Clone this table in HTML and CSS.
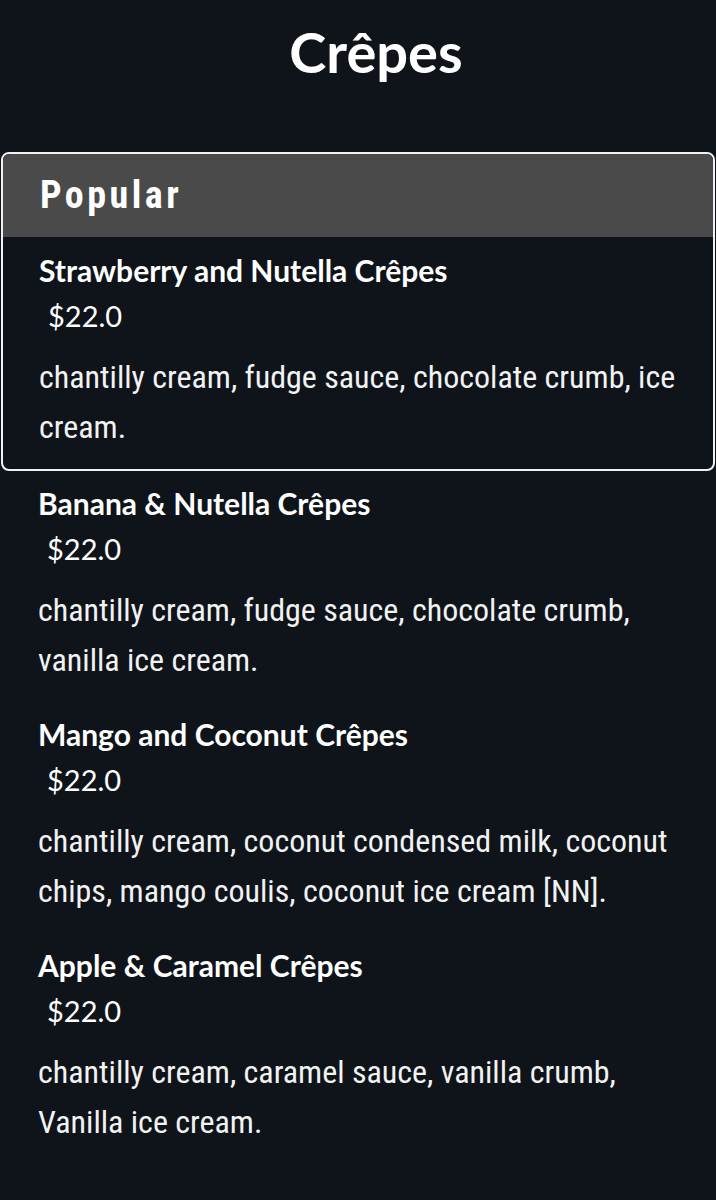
FILE: index.html
```html
<!DOCTYPE html>
<html lang="en">
<head>
<meta charset="utf-8">
<title>Crêpes</title>
<link rel="stylesheet" href="styles.css">
</head>
<body>
<main class="menu">
  <h1 class="menu-title">Crêpes</h1>

  <section class="featured">
    <h2 class="featured-head">Popular</h2>
    <article class="item">
      <h3 class="item-name">Strawberry and Nutella Crêpes</h3>
      <div class="item-price">$22.0</div>
      <p class="item-desc">chantilly cream, fudge sauce, chocolate crumb, ice cream.</p>
    </article>
  </section>

  <article class="item">
    <h3 class="item-name">Banana &amp; Nutella Crêpes</h3>
    <div class="item-price">$22.0</div>
    <p class="item-desc">chantilly cream, fudge sauce, chocolate crumb, vanilla ice cream.</p>
  </article>

  <article class="item">
    <h3 class="item-name">Mango and Coconut Crêpes</h3>
    <div class="item-price">$22.0</div>
    <p class="item-desc">chantilly cream, coconut condensed milk, coconut chips, mango coulis, coconut ice cream [NN].</p>
  </article>

  <article class="item">
    <h3 class="item-name">Apple &amp; Caramel Crêpes</h3>
    <div class="item-price">$22.0</div>
    <p class="item-desc">chantilly cream, caramel sauce, vanilla crumb, Vanilla ice cream.</p>
  </article>
</main>
</body>
</html>
```
FILE: styles.css
```css
html, body {
  margin: 0;
  padding: 0;
  background: #0e1419;
}

body {
  font-family: "Roboto Condensed", "Roboto", "Liberation Sans", sans-serif;
  color: #ffffff;
}

.menu {
  display: flex;
  flex-direction: column;
  padding: 20px 1px 40px;
}

.menu-title {
  margin: 0 0 68px;
  padding-left: 36px;
  font-family: "Lato", "Roboto", sans-serif;
  font-size: 56px;
  line-height: 64px;
  font-weight: 700;
  text-align: center;
}

.featured {
  border: 2px solid #f2f2f2;
  border-radius: 8px;
  overflow: hidden;
}

.featured-head {
  margin: 0;
  height: 83px;
  padding: 0 37px;
  background: #4a4a4a;
  font-size: 38px;
  line-height: 83px;
  font-weight: 700;
  letter-spacing: 3.5px;
}

.item {
  display: flex;
  flex-direction: column;
  padding: 15px 37px 17px;
}

.featured .item {
  padding-top: 16px;
  padding-left: 36px;
}

.item-name {
  margin: 0;
  font-family: "Lato", "Roboto", sans-serif;
  font-size: 30px;
  line-height: 34px;
  font-weight: 700;
}

.item-price {
  margin-top: 7px;
  padding-left: 9px;
  font-family: "Lato", "Roboto", sans-serif;
  font-size: 29px;
  line-height: 44px;
}

.item-desc {
  margin: 14px 0 0;
  font-size: 32px;
  line-height: 50px;
  color: #f2f2f2;
}
```
